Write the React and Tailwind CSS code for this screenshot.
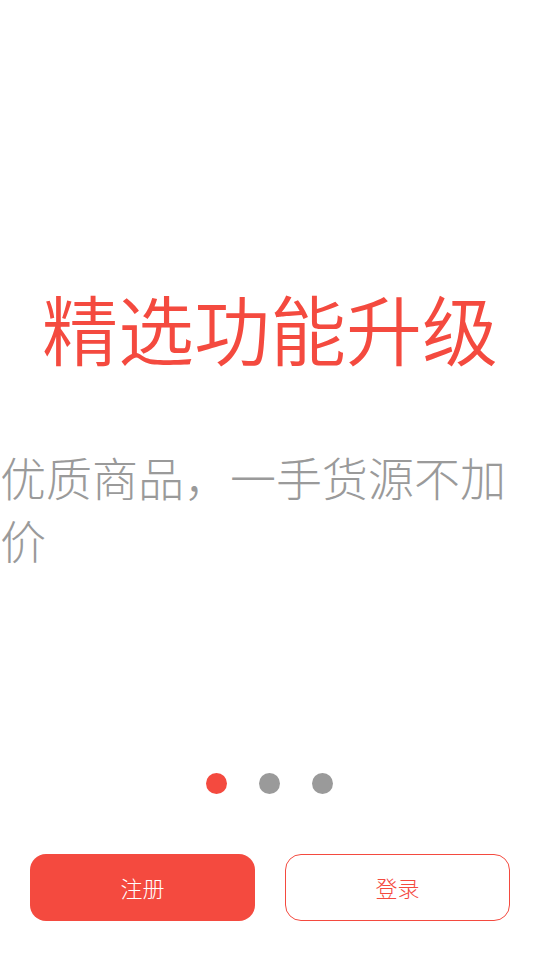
import React from "react";

const font = { fontFamily: '"Noto Sans CJK SC", "Noto Sans", sans-serif' };

const Dots = ({ active = 0, count = 3 }) => (
  <div className="flex justify-center gap-[32px] pr-[2px]">
    {Array.from({ length: count }).map((_, i) => (
      <span
        key={i}
        className={
          i === active
            ? "w-[21px] h-[21px] rounded-full bg-[#f44a3f]"
            : "w-[21px] h-[21px] rounded-full bg-[#9a9a9a]"
        }
      />
    ))}
  </div>
);

export default function App() {
  return (
    <div className="w-[540px] h-[960px] bg-white flex flex-col overflow-hidden" style={font}>
      <h1 className="pt-[289px] text-center text-[76px] leading-[76px] font-[350] text-[#f44a3f]">
        精选功能升级
      </h1>
      <p className="mt-[80px] text-[46px] leading-[63px] font-light text-[#9a9a9a]">
        优质商品，一手货源不加价
      </p>
      <div className="mt-[202px]">
        <Dots active={0} />
      </div>
      <div className="mt-[60px] flex justify-between px-[30px]">
        <button className="w-[225px] h-[67px] rounded-[16px] bg-[#f44a3f] text-white text-[22px] font-light">
          注册
        </button>
        <button className="w-[225px] h-[67px] rounded-[16px] border border-[#f44a3f] bg-white text-[#f44a3f] text-[22px] font-light">
          登录
        </button>
      </div>
    </div>
  );
}
